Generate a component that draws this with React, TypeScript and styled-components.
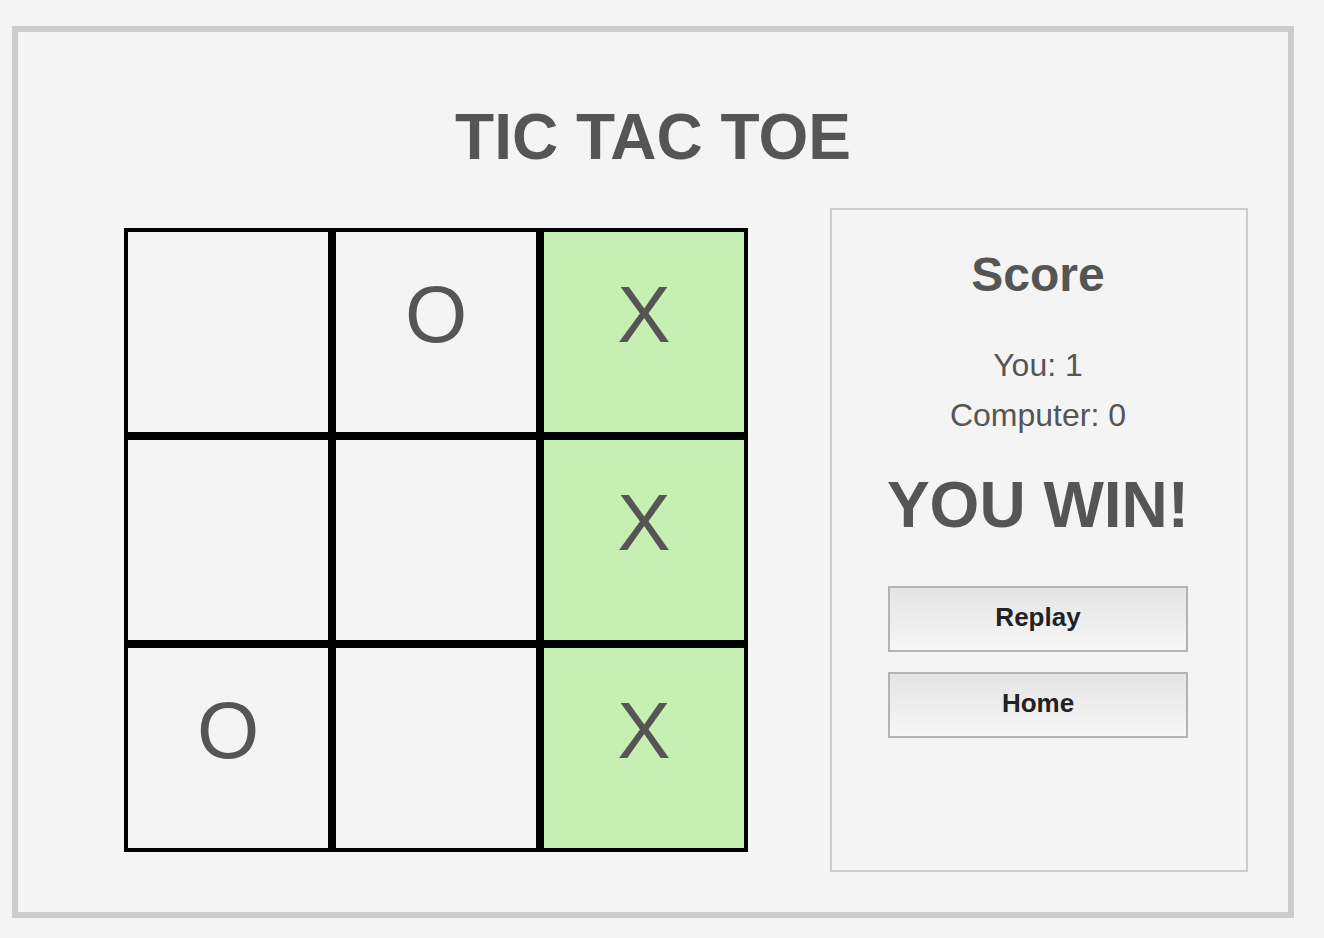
import styled, { createGlobalStyle } from "styled-components";

const GlobalStyle = createGlobalStyle`
    html, body {
        margin: 0;
        padding: 0;
        background: #f4f4f4;
        font-family: "Liberation Sans", Arial, Helvetica, sans-serif;
        color: #555;
    }
`;

type Mark = "X" | "O" | "";

const BOARD: Mark[] = ["", "O", "X", "", "", "X", "O", "", "X"];
const WINNING = [2, 5, 8];

const App: React.FC = () => {
    return (
        <>
            <GlobalStyle />
            <Page>
                <Frame>
                    <Title>TIC TAC TOE</Title>
                    <Row>
                        <Board>
                            {BOARD.map((mark, i) => (
                                <Cell key={i} $win={WINNING.includes(i)}>
                                    {mark}
                                </Cell>
                            ))}
                        </Board>
                        <ScorePanel>
                            <ScoreTitle>Score</ScoreTitle>
                            <ScoreLine $first>You: 1</ScoreLine>
                            <ScoreLine>Computer: 0</ScoreLine>
                            <Result>YOU WIN!</Result>
                            <ActionButton>Replay</ActionButton>
                            <ActionButton>Home</ActionButton>
                        </ScorePanel>
                    </Row>
                </Frame>
            </Page>
        </>
    );
};

export default App;

const Page = styled.div`
    padding: 26px 0 0 12px;
`;

const Frame = styled.div`
    box-sizing: border-box;
    width: 1282px;
    height: 892px;
    border: 6px solid #ccc;
    display: flex;
    flex-direction: column;
    align-items: stretch;
`;

const Title = styled.h1`
    margin: 68px 0 34px;
    font-size: 64px;
    line-height: 74px;
    font-weight: 700;
    text-align: center;
    color: #555;
`;

const Row = styled.div`
    display: flex;
    align-items: center;
    gap: 82px;
    padding-left: 106px;
`;

const Board = styled.div`
    display: grid;
    grid-template-columns: repeat(3, 208px);
    grid-template-rows: repeat(3, 208px);
`;

const Cell = styled.div<{ $win: boolean }>`
    box-sizing: border-box;
    border: 4px solid #000;
    background: ${(props) => (props.$win ? "#c6f0b3" : "#f4f4f4")};
    padding-top: 37px;
    text-align: center;
    font-size: 80px;
    line-height: 92px;
    color: #555;
`;

const ScorePanel = styled.div`
    box-sizing: border-box;
    width: 418px;
    height: 664px;
    border: 2px solid #ccc;
    display: flex;
    flex-direction: column;
    align-items: center;
    padding-top: 37px;
    padding-right: 2px;
`;

const ScoreTitle = styled.h2`
    margin: 0;
    font-size: 48px;
    line-height: 55px;
    font-weight: 700;
    color: #555;
`;

const ScoreLine = styled.p<{ $first?: boolean }>`
    margin: ${(props) => (props.$first ? "38px 0 0" : "0")};
    font-size: 32px;
    line-height: 50px;
    color: #555;
`;

const Result = styled.h1`
    margin: 28px 0 44px;
    font-size: 64px;
    line-height: 74px;
    font-weight: 700;
    color: #555;
`;

const ActionButton = styled.button`
    box-sizing: border-box;
    width: 300px;
    height: 66px;
    margin-bottom: 20px;
    padding: 0 0 3px;
    border: 2px solid #b3b3b3;
    border-radius: 0;
    background: linear-gradient(to bottom, #e4e4e4, #f6f6f6);
    font-family: "Liberation Sans", Arial, sans-serif;
    font-size: 26px;
    font-weight: 700;
    color: #222;
    cursor: pointer;
`;
